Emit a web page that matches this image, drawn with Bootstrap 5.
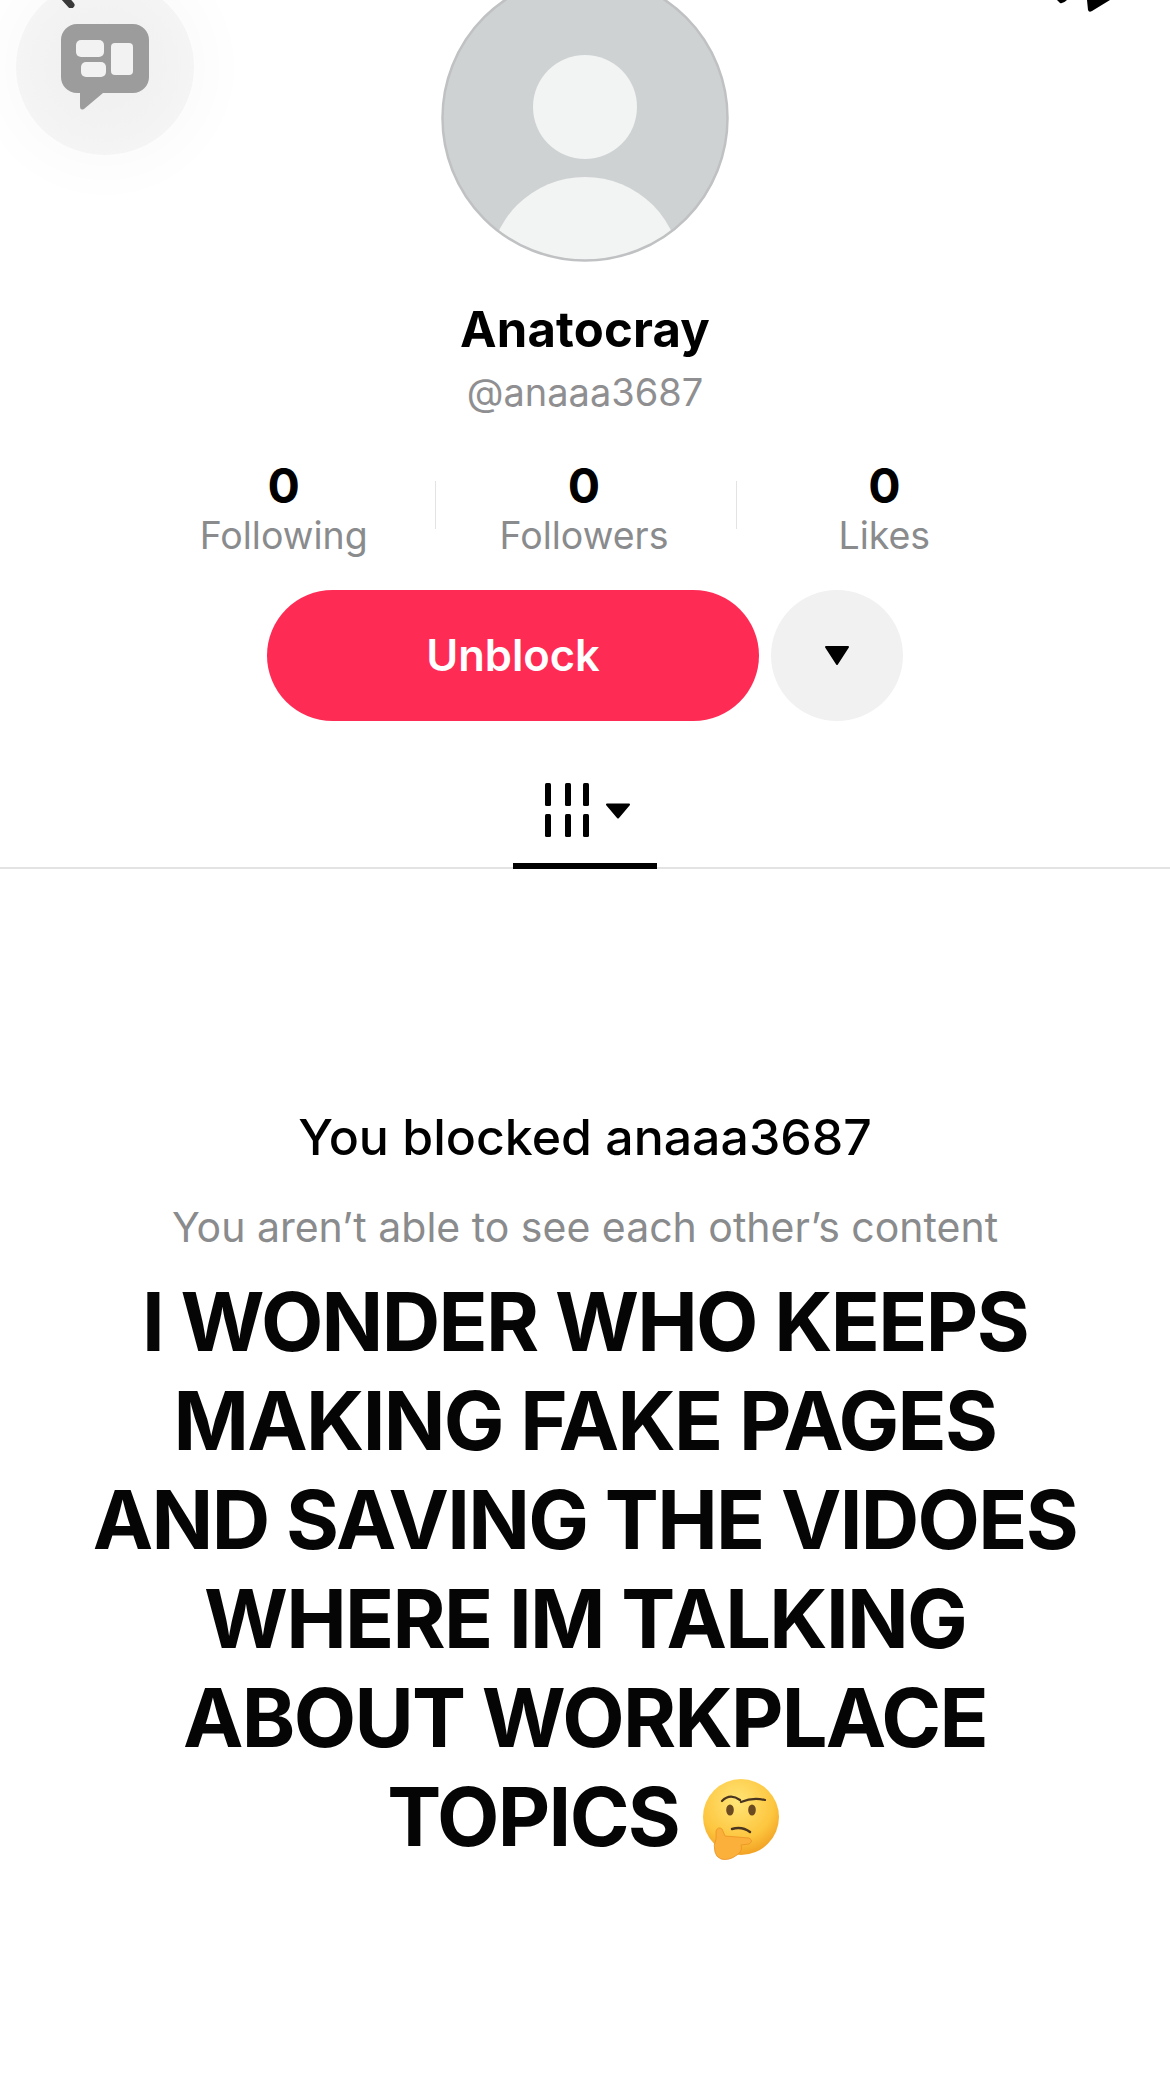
<!DOCTYPE html>
<html lang="en"><head><meta charset="utf-8"><title>Anatocray</title>
<link href="https://cdn.jsdelivr.net/npm/bootstrap@5.3.0/dist/css/bootstrap.min.css" rel="stylesheet">
<style>
html,body{background:#fff;overflow:hidden}
body{width:1170px;height:2080px;font-family:Inter,"Liberation Sans",Arial,sans-serif;color:#000;position:relative}
.ava{width:288px;height:288px;margin-top:-26px;display:block}
.uname{font-size:49px;line-height:56px;font-weight:700;margin-top:40px;letter-spacing:.2px}
.handle{font-size:38px;line-height:46px;color:#8f8f91;margin-top:11px}
.stats{margin-top:44px;width:900px;margin-left:-2px}
.stat{width:300px;text-align:center}
.stat b{display:block;font-size:48px;line-height:53px}
.stat span{display:block;font-size:37.500px;line-height:44px;color:#8a8b8d;margin-top:2px}
.sep{width:1px;height:48px;background:#e3e3e4;margin:22px -2px 0 2px}
.acts{margin-top:32px;gap:12px}
.unblock{width:492px;height:131px;border-radius:66px;background:#fe2c55;color:#fff;font-size:43.500px;font-weight:600;border:0}
.more{width:132px;height:131px;border-radius:50%;background:#f1f1f2;border:0;padding:0}
.tabbar{height:148px;border-bottom:2px solid #e3e3e4}
.tabsel{width:144px;height:148px;border-bottom:6px solid #000;padding-top:62px;padding-left:8px}
.blockt{font-size:50px;line-height:60px;margin-top:238px;font-weight:500}
.blocks{font-size:41px;line-height:50px;color:#8a8b8d;margin-top:35px}
.bigt{font-size:81px;line-height:99px;font-weight:650;color:#050505;margin-top:21px;letter-spacing:-1.700px}
.bubble{position:absolute;left:15px;top:-22px;width:180px;height:178px;border-radius:50%;background:radial-gradient(circle,#efefef 0,#f3f3f3 55%,#f8f8f8 100%);border:1px solid #fcfcfc;box-shadow:0 0 44px 26px rgba(0,0,0,.014)}
.bubico{position:absolute;left:60px;top:24px}
.topi{position:absolute;top:0}
.emo{width:82px;height:82px;vertical-align:-15px;margin-left:4px}
</style></head>
<body>
<div class="d-flex flex-column align-items-center text-center">
<svg class="ava" viewBox="0 0 288 288"><defs><clipPath id="ac"><circle cx="144" cy="144" r="142"/></clipPath></defs><circle cx="144" cy="144" r="142.5" fill="#cfd2d3"/><g clip-path="url(#ac)"><circle cx="144" cy="133" r="52" fill="#f2f3f3"/><circle cx="144" cy="299" r="96" fill="#f2f3f3"/></g><circle cx="144" cy="144" r="142.5" fill="none" stroke="#bfc1c2" stroke-width="2.500"/></svg>
<div class="uname">Anatocray</div>
<div class="handle">@anaaa3687</div>
<div class="d-flex justify-content-center stats">
<div class="stat"><b>0</b><span>Following</span></div><div class="sep"></div>
<div class="stat"><b>0</b><span>Followers</span></div><div class="sep"></div>
<div class="stat"><b>0</b><span>Likes</span></div>
</div>
<div class="d-flex acts">
<button class="btn unblock">Unblock</button>
<button class="btn more d-flex align-items-center justify-content-center"><svg width="26" height="22" viewBox="0 0 26 22"><path d="M2 2h22l-11 17z" fill="#000" stroke="#000" stroke-width="2" stroke-linejoin="round"/></svg></button>
</div>
<div class="tabbar w-100 d-flex justify-content-center mt-0">
<div class="tabsel d-flex justify-content-center">
<svg width="88" height="56" viewBox="0 0 88 56"><g fill="#000"><rect x="0" y="0" width="6" height="23" rx="1.5"/><rect x="20" y="0" width="6" height="23" rx="1.5"/><rect x="38" y="0" width="6" height="23" rx="1.5"/><rect x="0" y="31" width="6" height="23" rx="1.5"/><rect x="20" y="31" width="6" height="23" rx="1.5"/><rect x="38" y="31" width="6" height="23" rx="1.5"/><path d="M62 21.500h22l-11 13z" stroke="#000" stroke-width="2" stroke-linejoin="round"/></g></svg>
</div></div>
<div class="blockt">You blocked anaaa3687</div>
<div class="blocks">You aren’t able to see each other’s content</div>
<div class="bigt">I WONDER WHO KEEPS<br>MAKING FAKE PAGES<br>AND SAVING THE VIDOES<br>WHERE IM TALKING<br>ABOUT WORKPLACE<br>TOPICS <svg class="emo" viewBox="0 0 82 82" role="img" aria-label="thinking face"><defs><radialGradient id="fg" cx=".45" cy=".3" r=".75"><stop offset="0" stop-color="#ffe577"/><stop offset=".65" stop-color="#fdc63f"/><stop offset="1" stop-color="#f09a1e"/></radialGradient></defs><circle cx="40" cy="38" r="38" fill="url(#fg)"/><path d="M21 22q8-8 18-1M40 23q12-5 24-2" fill="none" stroke="#4a3520" stroke-width="2.200" stroke-linecap="round"/><ellipse cx="29" cy="31" rx="3.800" ry="5.500" fill="#6b4a22"/><ellipse cx="51" cy="31" rx="3.800" ry="5.500" fill="#6b4a22"/><path d="M31 50q10-3 18 3" fill="none" stroke="#4a3520" stroke-width="2.500" stroke-linecap="round"/><path d="M14 73Q12 66 15 60L15 52Q17 47 21 50L24 57Q36 58 48 59Q53 62 48 65L40 66Q42 72 36 76Q28 82 20 80Q15 78 14 73z" fill="#fbb03b" stroke="#ea9224" stroke-width=".8"/></svg></div>
</div>
<div class="bubble"></div>
<svg class="bubico" width="90" height="88" viewBox="0 0 90 88"><path fill="#9c9c9c" d="M17 0h56a16 16 0 0 1 16 16v37a16 16 0 0 1-16 16H43L24 85q-4 2-4-3V69h-3A16 16 0 0 1 1 53V16A16 16 0 0 1 17 0z"/><g fill="#f2f2f2"><rect x="16" y="16" width="28" height="17" rx="5"/><rect x="21" y="38" width="25" height="15" rx="5"/><rect x="51" y="19" width="22" height="32" rx="4"/></g></svg>
<svg class="topi" style="left:55px" width="24" height="8" viewBox="0 0 24 8"><path d="M8-4l8 9" stroke="#3a3a3a" stroke-width="7" stroke-linecap="round" fill="none"/></svg>
<svg class="topi" style="left:1050px" width="65" height="14" viewBox="0 0 65 14"><path d="M7 0h10q-4 4-7 3z" fill="#000"/><path d="M37 0l1 10q1 3 4 1L60 0z" fill="#000"/></svg>
<script src="https://cdn.jsdelivr.net/npm/bootstrap@5.3.0/dist/js/bootstrap.bundle.min.js"></script>
</body></html>
